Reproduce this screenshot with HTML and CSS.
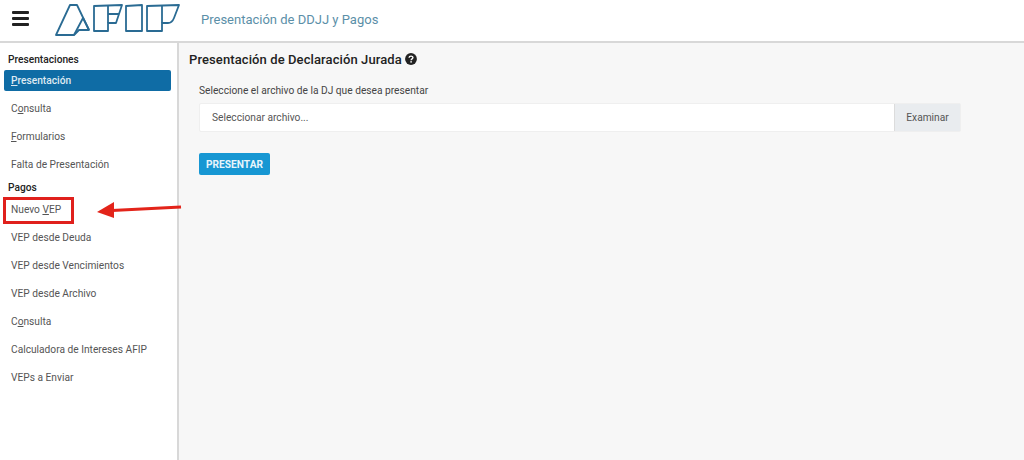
FILE: index.html
```html
<!DOCTYPE html>
<html>
<head>
  <title>Presentación de DDJJ y Pagos</title>
  <link rel="stylesheet" href="styles.css">
</head>
<body>
  <header class="topbar">
    <div class="burger"><span></span><span></span><span></span></div>
    <svg class="logo" width="130" height="40" viewBox="0 0 130 40" fill="none" stroke="#2a6b93" stroke-width="1.8" stroke-linejoin="round">
      <path d="M6 35 L20 5 L27 5 L39 30 L29 30 L24 35 Z"/>
      <path d="M24 35 L33 18 L39 30"/>
      <path d="M44 6 L72 5 L66 23 L58 23 L58 31 L44 31 Z"/>
      <path d="M58 6 L58 23 M58 14 L69 14"/>
      <path d="M76 6 L92 5 L92 31 L76 31 Z"/>
      <path d="M97 6 L129 5 L124 18 Q122 23 118 23 L112 23 L112 31 L97 31 Z"/>
      <path d="M112 6 L112 23"/>
    </svg>
    <span class="app-title">Presentación de DDJJ y Pagos</span>
  </header>
  <div class="layout">
    <nav class="sidebar">
      <h4 class="nav-title">Presentaciones</h4>
      <a class="nav-item active"><u>P</u>resentación</a>
      <a class="nav-item">C<u>o</u>nsulta</a>
      <a class="nav-item"><u>F</u>ormularios</a>
      <a class="nav-item">Falta de Presentación</a>
      <h4 class="nav-title">Pagos</h4>
      <a class="nav-item marked">Nuevo <u>V</u>EP</a>
      <a class="nav-item">VEP desde Deuda</a>
      <a class="nav-item">VEP desde Vencimientos</a>
      <a class="nav-item">VEP desde Archivo</a>
      <a class="nav-item">C<u>o</u>nsulta</a>
      <a class="nav-item">Calculadora de Intereses AFIP</a>
      <a class="nav-item">VEPs a Enviar</a>
    </nav>
    <main class="content">
      <h1 class="page-title">Presentación de Declaración Jurada
        <svg class="help" width="12" height="12" viewBox="0 0 13 13">
          <circle cx="6.5" cy="6.5" r="6.4" fill="#222"/>
          <path d="M4.4 5.1 C4.5 2.9 8.6 2.9 8.6 5 C8.6 6.4 6.6 6.3 6.6 7.8" fill="none" stroke="#fff" stroke-width="1.5"/>
          <rect x="5.8" y="8.8" width="1.6" height="1.6" fill="#fff"/>
        </svg>
      </h1>
      <form class="dj-form">
        <label class="file-label">Seleccione el archivo de la DJ que desea presentar</label>
        <div class="file-input">
          <span class="file-text">Seleccionar archivo...</span>
          <span class="file-btn">Examinar</span>
        </div>
        <button class="submit" type="button">PRESENTAR</button>
      </form>
    </main>
  </div>
  <svg class="arrow" width="90" height="20" viewBox="0 0 90 20">
    <path d="M87 6 L18 9.5" stroke="#e3241a" stroke-width="3"/>
    <path d="M3 11 L20 1 L20 17 Z" fill="#e3241a"/>
  </svg>
</body>
</html>
```
FILE: styles.css
```css
* {
  box-sizing: border-box;
}

body {
  margin: 0;
  height: 460px;
  overflow: hidden;
  position: relative;
  font-family: Roboto, "Liberation Sans", sans-serif;
  color: #444;
  background: #f7f7f7;
}

.topbar {
  display: flex;
  align-items: center;
  height: 43px;
  background: #fff;
  border-bottom: 2px solid #d8d8d8;
}

.burger {
  display: flex;
  flex-direction: column;
  gap: 3px;
  width: 17px;
  margin: -4px 21px 0 12px;
}

.burger span {
  height: 3px;
  background: #222;
  border-radius: 1px;
}

.logo {
  flex: none;
  margin-top: -1px;
}

.app-title {
  margin: -2px 0 0 21px;
  font-size: 13px;
  color: #5b8fa8;
}

.layout {
  display: flex;
  height: 417px;
}

.sidebar {
  width: 179px;
  flex: none;
  padding: 8px 6px 0 4px;
  background: #fff;
  border-right: 2px solid #d8d8d8;
}

.nav-title {
  margin: 0;
  padding-left: 4px;
  height: 17px;
  line-height: 17px;
  font-size: 10.2px;
  font-weight: 500;
  color: #222;
}

.nav-item {
  display: block;
  height: 28px;
  line-height: 28px;
  padding-left: 7px;
  font-size: 10.2px;
  color: #555;
}

.active {
  height: 21px;
  line-height: 21px;
  margin: 2px 0 4px;
  border-radius: 2px;
  background: #0f6ca5;
  color: #dfeaf2;
  font-weight: 500;
}

.marked {
  position: relative;
}

.marked::after {
  content: "";
  box-sizing: border-box;
  position: absolute;
  left: -1px;
  top: 1px;
  width: 71px;
  height: 27px;
  border: 3px solid #e0201c;
}

.content {
  flex: 1;
  padding: 8px 10px;
}

.page-title {
  display: flex;
  align-items: center;
  gap: 3px;
  margin: 0;
  height: 17px;
  font-size: 13px;
  font-weight: 500;
  letter-spacing: 0.1px;
  color: #222;
}

.help {
  margin-top: -1px;
}

.dj-form {
  padding: 16px 0 0 10px;
  width: 772px;
}

.file-label {
  display: block;
  height: 14px;
  line-height: 14px;
  font-size: 10.2px;
  color: #444;
}

.file-input {
  display: flex;
  height: 29px;
  margin-top: 5px;
  background: #fff;
  border: 1px solid #efefef;
  border-radius: 2px;
}

.file-text {
  flex: 1;
  padding-left: 12px;
  line-height: 27px;
  font-size: 10.2px;
  color: #555;
}

.file-btn {
  width: 66px;
  text-align: center;
  line-height: 27px;
  font-size: 10.2px;
  color: #555;
  background: #e9ecef;
  border-left: 1px solid #dcdcdc;
}

.submit {
  display: block;
  width: 71px;
  height: 22px;
  margin-top: 21px;
  padding: 0;
  border: none;
  border-radius: 2px;
  background: #1797d3;
  color: #e8f5fb;
  font-family: inherit;
  font-size: 10.2px;
  font-weight: 700;
}

.arrow {
  position: absolute;
  left: 94px;
  top: 201px;
}
```
